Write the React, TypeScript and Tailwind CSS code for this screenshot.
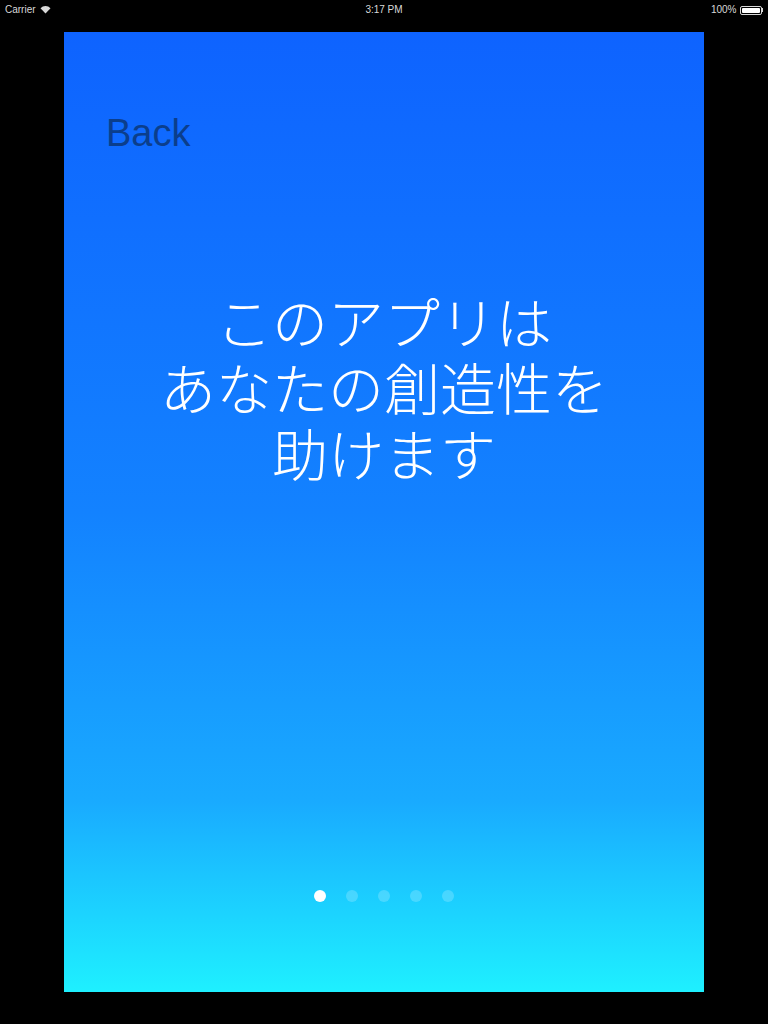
import React from 'react';

const StatusBar = () => (
  <div className="h-5 bg-black flex items-center justify-between px-[5px] text-[10px] leading-none text-[#d8d8d8] font-['Liberation_Sans',sans-serif] relative">
    <div className="flex items-center gap-[4px]">
      <span>Carrier</span>
      <svg width="11" height="8" viewBox="0 0 11 8">
        <path d="M0.5 2.2 A7 7 0 0 1 10.5 2.2 L5.5 7.5 Z" fill="#d8d8d8" />
      </svg>
    </div>
    <span className="absolute left-1/2 -translate-x-1/2">3:17 PM</span>
    <div className="flex items-center gap-[3px]">
      <span>100%</span>
      <div className="flex items-center">
        <div className="w-[22px] h-[9px] border border-[#d8d8d8] rounded-[2px] p-[1px]">
          <div className="w-full h-full bg-white rounded-[1px]" />
        </div>
        <div className="w-[1.5px] h-[4px] bg-[#d8d8d8]" />
      </div>
    </div>
  </div>
);

const App = () => {
  const pages = [0, 1, 2, 3, 4];
  const current = 0;

  return (
    <div className="w-[768px] h-[1024px] bg-black flex flex-col">
      <StatusBar />
      <div className="flex-1 px-16 pt-3 pb-8">
        <div className="w-full h-full bg-[linear-gradient(to_bottom,#0e63ff_0%,#1382ff_50%,#19aaff_80%,#1ef0ff_100%)] flex flex-col">
          <div className="pt-[82px] pl-[42px] h-[120px]">
            <span className="text-[38px] leading-none text-[#0b3e8c] font-['Helvetica','Liberation_Sans',sans-serif]">Back</span>
          </div>
          <div className="mt-[135px] text-center text-white text-[56px] leading-[66px] font-light font-['Noto_Sans_CJK_JP',sans-serif]">
            <div>このアプリは</div>
            <div>あなたの創造性を</div>
            <div>助けます</div>
          </div>
          <div className="mt-auto mb-[90px] flex justify-center gap-5">
            {pages.map((p) => (
              <div
                key={p}
                className={p === current ? 'w-3 h-3 rounded-full bg-white' : 'w-3 h-3 rounded-full bg-white/20'}
              />
            ))}
          </div>
        </div>
      </div>
    </div>
  );
};

export default App;
